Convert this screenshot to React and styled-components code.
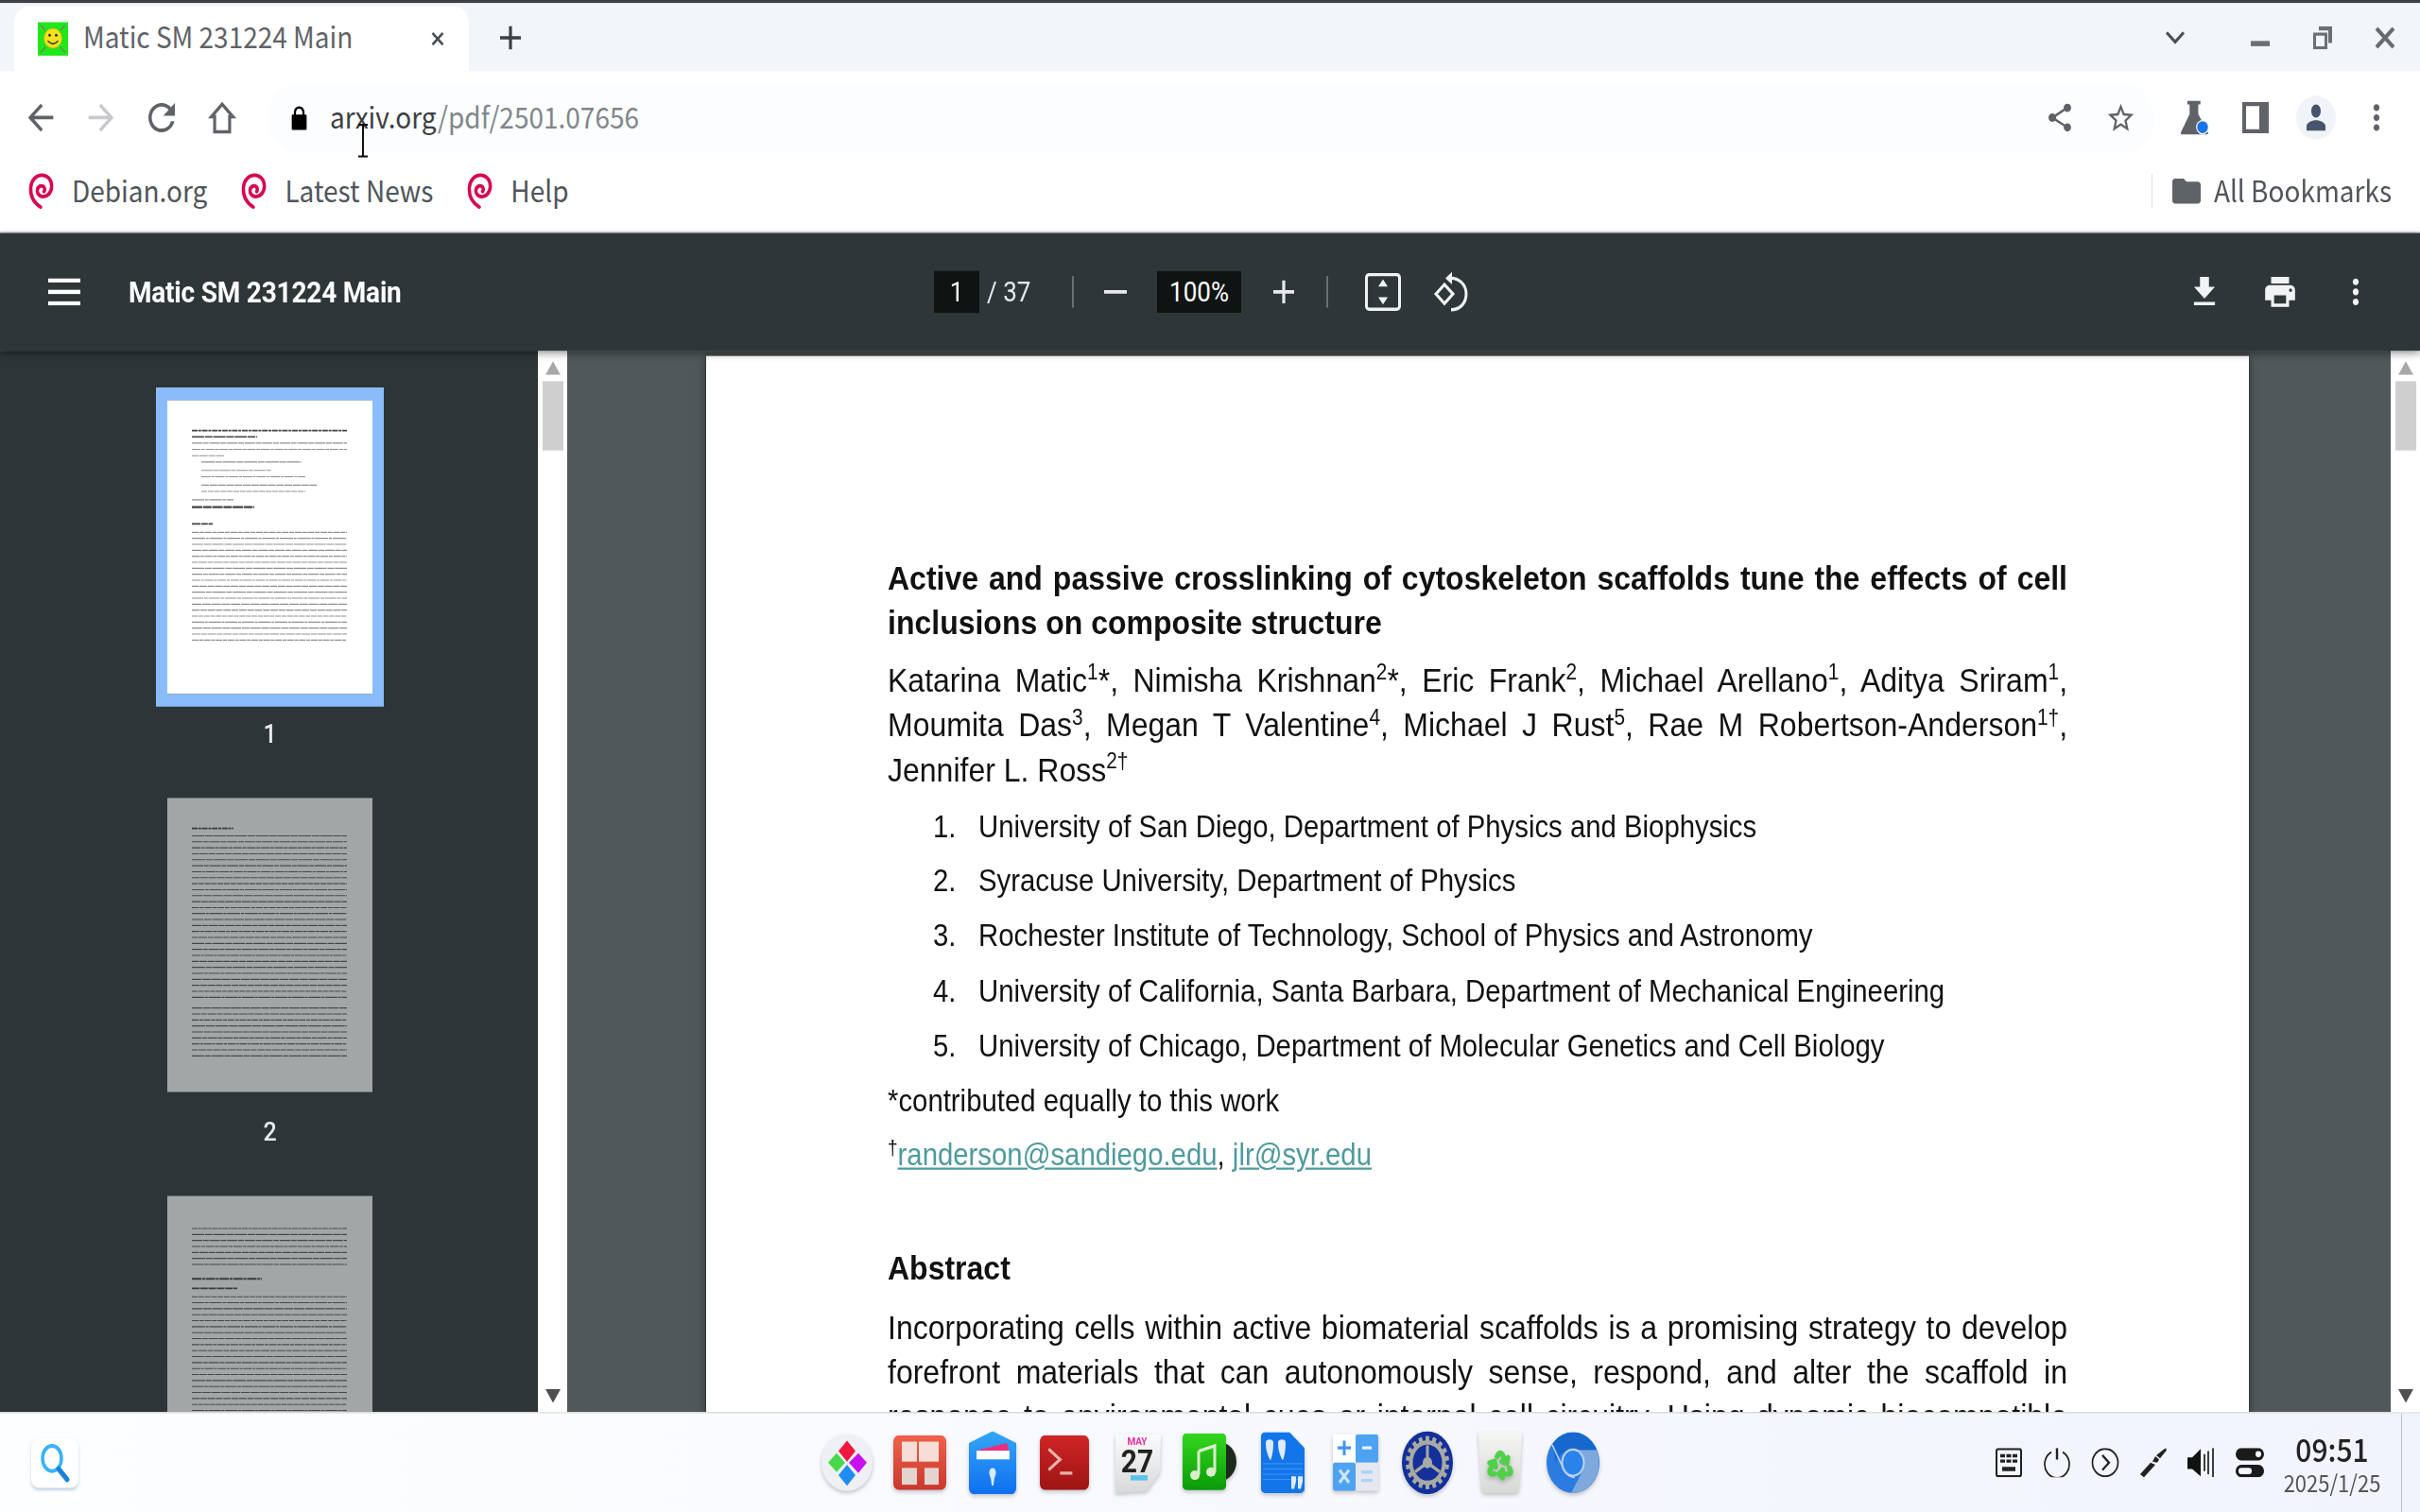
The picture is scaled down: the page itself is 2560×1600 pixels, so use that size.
import React from 'react';
import styled, { createGlobalStyle } from 'styled-components';
import { Recycle } from 'lucide-react';

const GlobalStyle = createGlobalStyle`
   html, body {
      margin: 0;
      padding: 0;
      background: #fff;
   }
`;

const UI_FONT = '"Noto Sans CJK SC", "Noto Sans", sans-serif';

const Frame = styled.div`
   width: 2560px;
   height: 1600px;
   overflow: hidden;
`;

// the capture is a 2560x1440 desktop stretched to 1600 high, so the whole
// screen is laid out at 1440 and stretched the same way
const Screen = styled.div`
   width: 2560px;
   height: 1440px;
   display: flex;
   flex-direction: column;
   overflow: hidden;
   transform: scaleY(1.1111);
   transform-origin: 0 0;
   font-family: ${UI_FONT};
`;

const TopEdge = styled.div`
   height: 3px;
   flex: none;
   background: #3b4043;
`;

const TabStrip = styled.div`
   height: 65px;
   flex: none;
   display: flex;
   align-items: center;
   background: #f2f6fa;
   padding-left: 15px;
`;

const Tab = styled.div`
   width: 481px;
   height: 62px;
   margin-top: 3px;
   display: flex;
   align-items: center;
   padding-left: 25px;
   box-sizing: border-box;
   background: #fff;
   border-radius: 16px 16px 0 0;
`;

const TabTitle = styled.span`
   margin-left: 16px;
   margin-bottom: 7px;
   width: 368px;
   font-size: 28px;
   color: #5f6368;
   white-space: nowrap;
`;

const Slot = styled.div`
   width: ${props => props.$width || 64}px;
   flex: none;
   display: flex;
   align-items: center;
   justify-content: center;
   color: ${props => props.$color || '#5f6368'};
   margin-left: ${props => props.$left || 0}px;
   margin-right: ${props => props.$right || 0}px;
`;

const WindowControls = styled.div`
   margin-left: auto;
   padding-right: 4px;
   display: flex;
   align-items: center;
`;

const Toolbar = styled.div`
   height: 72px;
   flex: none;
   padding-top: 8px;
   padding-left: 11px;
   padding-right: 14px;
   display: flex;
   align-items: center;
   background: #fff;
`;

const Omnibox = styled.div`
   position: relative;
   flex: 1;
   height: 67px;
   margin-left: 16px;
   margin-right: 11px;
   padding: 0 4px 0 20px;
   display: flex;
   align-items: center;
   background: #fbfdfe;
   border-radius: 34px;
`;

const Url = styled.span`
   margin-left: 19px;
   margin-bottom: 4px;
   font-size: 28px;
   color: #80868b;
`;

const UrlHost = styled.span`
   color: #3c4043;
`;

const TextCursor = styled.svg`
   position: absolute;
   left: 95px;
   top: 39px;
`;

const OmniActions = styled.div`
   margin-left: auto;
   display: flex;
   align-items: center;
`;

const Avatar = styled.div`
   width: 42px;
   height: 42px;
   border-radius: 50%;
   background: #f0f4f9;
   display: flex;
   align-items: center;
   justify-content: center;
`;

const BookmarkBar = styled.div`
   height: 74px;
   flex: none;
   padding: 0 30px 5px 29px;
   display: flex;
   align-items: center;
   gap: 35px;
   background: #fff;
   border-bottom: 1px solid #a9acae;
   box-sizing: border-box;
`;

const Bookmark = styled.div`
   display: flex;
   align-items: center;
   gap: 19px;
   font-size: 28px;
   color: #50555a;
`;

const BookmarkLabel = styled.span`
   margin-bottom: 2px;
`;

const AllBookmarks = styled(Bookmark)`
   margin-left: auto;
   height: 32px;
   padding-left: 18px;
   border-left: 1px solid #dadce0;
   gap: 11px;
`;

const PdfToolbar = styled.div`
   height: 112px;
   flex: none;
   position: relative;
   z-index: 2;
   display: flex;
   align-items: center;
   background: #2e3638;
   color: #fff;
   box-shadow: 0 3px 8px rgba(0, 0, 0, 0.45);
   font-family: Roboto, sans-serif;
`;

const PdfLeft = styled.div`
   width: 988px;
   flex: none;
   padding-left: 51px;
   box-sizing: border-box;
   display: flex;
   align-items: center;
   gap: 51px;
`;

const PdfTitle = styled.span`
   font-size: 28px;
   font-weight: 700;
   white-space: nowrap;
   letter-spacing: -0.2px;
`;

const DarkField = styled.div`
   width: ${props => props.$width}px;
   height: 40px;
   flex: none;
   background: #0f1412;
   display: flex;
   align-items: center;
   justify-content: center;
   font-size: 26px;
`;

const PageTotal = styled.div`
   width: 98px;
   flex: none;
   box-sizing: border-box;
   padding-left: 8px;
   font-size: 26px;
   color: #e8eaed;
`;

const Separator = styled.div`
   width: 2px;
   height: 30px;
   flex: none;
   background: #697072;
`;

const PdfRight = styled.div`
   margin-left: auto;
   padding-right: 28px;
   display: flex;
   align-items: center;
`;

const Workspace = styled.div`
   flex: 1;
   min-height: 0;
   display: flex;
   overflow: hidden;
`;

const Sidebar = styled.div`
   width: 569px;
   flex: none;
   padding: 47px 0 0 2px;
   box-sizing: border-box;
   display: flex;
   flex-direction: column;
   align-items: center;
   background: #2d3537;
   overflow: hidden;
`;

const Thumb = styled.div`
   flex: none;
   display: flex;
   flex-direction: column;
   align-items: center;
   margin-bottom: 47px;
`;

const ThumbPage = styled.div`
   width: 217px;
   height: 280px;
   flex: none;
   background: #fff;
   opacity: ${props => (props.$selected ? 1 : 0.56)};
   outline: ${props => (props.$selected ? '12px solid #8bbcfa' : 'none')};
`;

const ThumbSvg = styled.svg`
   display: block;
   filter: blur(0.4px);
`;

const ThumbLabel = styled.div`
   height: 28px;
   margin-top: 24px;
   line-height: 28px;
   font-family: Roboto, sans-serif;
   font-size: 25px;
   font-weight: 500;
   color: #e8eaed;
`;

const ScrollTrack = styled.div`
   width: ${props => props.$width}px;
   flex: none;
   display: flex;
   flex-direction: column;
   align-items: center;
   padding: 10px 0 9px;
   box-sizing: border-box;
   background: #fff;
`;

const ScrollThumb = styled.div`
   width: 22px;
   height: 66px;
   margin-top: 6px;
   flex: none;
   background: #cfcfcf;
`;

const ScrollArrowDown = styled.svg`
   margin-top: auto;
`;

const Viewer = styled.div`
   flex: 1;
   min-width: 0;
   padding: 5px 0 0 147px;
   background: #505859;
   overflow: hidden;
`;

const Page = styled.div`
   width: 1632px;
   min-height: 1300px;
   box-sizing: border-box;
   padding: 191px 192px 0;
   background: #fff;
   box-shadow: 0 0 8px rgba(0, 0, 0, 0.5);
   font-family: 'Liberation Sans', Arial, sans-serif;
   font-size: 32px;
   line-height: 42.4px;
   color: #111;
`;

const PaperLine = styled.div`
   text-align: ${props => (props.$last ? 'left' : 'justify')};
   text-align-last: ${props => (props.$last ? 'left' : 'justify')};
   white-space: nowrap;
   font-size: ${props => props.$size || 32}px;
   font-weight: ${props => (props.$bold ? 700 : 400)};
   margin-top: ${props => props.$top || 0}px;
`;

const Sup = styled.sup`
   display: inline-block;
   font-size: 0.65em;
   line-height: 0;
   vertical-align: super;
`;

const Affiliations = styled.ol`
   margin: 12px 0 0;
   padding: 0;
   list-style: none;
   font-size: 29.33px;
`;

const Affiliation = styled.li`
   display: flex;
   height: 42.4px;
   margin-bottom: 9.8px;
   white-space: nowrap;
`;

const AffNumber = styled.span`
   width: 96px;
   flex: none;
   padding-left: 48px;
   box-sizing: border-box;
`;

const MailLink = styled.span`
   color: #4f9a9c;
   text-decoration: underline;
`;

const Taskbar = styled.div`
   height: 95px;
   flex: none;
   position: relative;
   z-index: 3;
   display: grid;
   grid-template-columns: 1fr auto 1fr;
   align-items: center;
   background: linear-gradient(90deg, #fcfeff 0%, #f7f9fe 50%, #f1f4fd 100%);
   border-top: 1px solid #d9d9d9;
   box-sizing: border-box;
`;

const SearchTile = styled.div`
   width: 50px;
   height: 47px;
   margin-left: 33px;
   display: flex;
   align-items: center;
   justify-content: center;
   background: #fff;
   border-radius: 8px;
   box-shadow: 0 2px 3px rgba(90, 130, 180, 0.35);
`;

const Dock = styled.div`
   display: flex;
   align-items: center;
`;

const DockItem = styled.div`
   position: relative;
   width: 76.8px;
   display: flex;
   justify-content: center;

   svg {
      filter: blur(0.5px) drop-shadow(0 2px 2px rgba(0, 0, 0, 0.22));
   }
`;

const RunDot = styled.div`
   position: absolute;
   left: 28.4px;
   bottom: -36px;
   width: 20px;
   height: 4px;
   background: ${props => props.$color};
`;

const Tray = styled.div`
   height: 100%;
   display: flex;
   align-items: center;
   justify-content: flex-end;
   position: relative;
`;

const TrayIcon = styled.div`
   width: 51px;
   display: flex;
   justify-content: center;
`;

const Clock = styled.div`
   width: 120px;
   margin-left: 2px;
   margin-right: 13px;
   display: flex;
   flex-direction: column;
   align-items: center;
`;

const ClockTime = styled.div`
   font-size: 30px;
   font-weight: 500;
   line-height: 36px;
   color: #222;
`;

const ClockDate = styled.div`
   font-size: 22px;
   line-height: 28px;
   color: #555;
`;

const TrayEdge = styled.div`
   width: 1px;
   height: 100%;
   margin-right: 19px;
   background: #b9bcc2;
`;

const Glyph = ({ d, size = 36, fill = 'currentColor' }) => (
   <svg width={size} height={size} viewBox="0 0 24 24" fill={fill}>
      <path d={d} />
   </svg>
);

const Favicon = () => (
   <svg width="32" height="32" viewBox="0 0 32 32">
      <rect width="32" height="32" fill="#1fe81a" />
      <circle cx="16" cy="15.5" r="9.5" fill="#f4e01c" stroke="#c9b210" strokeWidth="0.6" />
      <circle cx="12.5" cy="12.5" r="1.4" fill="#333" />
      <circle cx="19.5" cy="12.5" r="1.4" fill="#333" />
      <path d="M10.5 18q5.5 5.5 11 0" fill="none" stroke="#333" strokeWidth="1.3" />
      <path d="M3 3l5 5M29 3l-5 5M3 29l5-5M29 29l-5-5" stroke="#6b8f50" strokeWidth="1.6" />
   </svg>
);

const DebianSwirl = () => (
   <svg width="28" height="36" viewBox="0 0 24 30" fill="none">
      <path
         d="M12 28C5 24 2.5 18 3 12 3.6 6 8 2 13 2c5.5 0 9 4 9 9 0 5.5-4.5 9-8.5 8.500-3-.4-5-3-4.500-5.500.5-2.500 3-4 5-3 1.800.9 2.200 3 1 4.300"
         stroke="#d70751"
         strokeWidth="3"
         strokeLinecap="round"
      />
   </svg>
);

const PATHS = {
   back: 'M20 11H7.830l5.590-5.590L12 4l-8 8 8 8 1.410-1.410L7.830 13H20v-2z',
   forward: 'M4 11h12.170l-5.590-5.590L12 4l8 8-8 8-1.410-1.410L16.170 13H4v-2z',
   reload: 'M17.650 6.350A7.958 7.958 0 0 0 12 4c-4.420 0-7.990 3.580-7.990 8s3.570 8 7.990 8c3.730 0 6.840-2.550 7.730-6h-2.080A5.990 5.990 0 0 1 12 18c-3.310 0-6-2.690-6-6s2.690-6 6-6c1.660 0 3.140.690 4.220 1.780L13 11h7V4l-2.350 2.350z',
   home: 'M12 2.500 2.500 12.500H6V21.500h12V12.500h3.500L12 2.500zM8 19.500v-9H7.200L12 5.400l4.800 5.100H16v9H8z',
   lock: 'M18 9h-1V7c0-2.760-2.240-5-5-5S7 4.240 7 7v2H6c-.6 0-1 .4-1 1v11c0 .6.4 1 1 1h12c.6 0 1-.4 1-1V10c0-.6-.4-1-1-1zM9 7c0-1.660 1.340-3 3-3s3 1.340 3 3v2H9V7z',
   share: 'M18 16.080c-.76 0-1.440.3-1.960.77L8.910 12.700c.05-.23.090-.46.090-.7s-.04-.47-.09-.7l7.050-4.110c.54.5 1.250.81 2.040.81 1.660 0 3-1.340 3-3s-1.340-3-3-3-3 1.340-3 3c0 .24.04.47.09.7L8.040 9.810C7.500 9.310 6.790 9 6 9c-1.660 0-3 1.340-3 3s1.340 3 3 3c.79 0 1.500-.31 2.040-.81l7.120 4.160c-.05.21-.08.43-.08.65 0 1.610 1.310 2.920 2.920 2.920s2.920-1.310 2.920-2.920-1.310-2.920-2.920-2.920z',
   star: 'M22 9.240l-7.190-.62L12 2 9.190 8.630 2 9.240l5.460 4.730L5.820 21 12 17.270 18.180 21l-1.630-7.030L22 9.240zM12 15.400l-3.760 2.270 1-4.280-3.320-2.880 4.380-.38L12 6.100l1.710 4.040 4.380.38-3.320 2.880 1 4.280L12 15.400z',
   person: 'M12 12c2.210 0 4-2.240 4-5s-1.790-5-4-5-4 2.240-4 5 1.790 5 4 5zm0 2c-3.670 0-8 1.840-8 4.500V22h16v-3.500c0-2.660-4.330-4.500-8-4.500z',
   dots: 'M12 8c1.100 0 2-.9 2-2s-.9-2-2-2-2 .9-2 2 .9 2 2 2zm0 2c-1.100 0-2 .9-2 2s.9 2 2 2 2-.9 2-2-.9-2-2-2zm0 6c-1.100 0-2 .9-2 2s.9 2 2 2 2-.9 2-2-.9-2-2-2z',
   folder: 'M10 4H4c-1.100 0-2 .9-2 2v12c0 1.100.9 2 2 2h16c1.100 0 2-.9 2-2V8c0-1.100-.9-2-2-2h-8l-2-2z',
   download: 'M19 9h-4V3H9v6H5l7 7 7-7zM5 18v2h14v-2H5z',
   print: 'M19 8H5c-1.660 0-3 1.340-3 3v6h4v4h12v-4h4v-6c0-1.660-1.340-3-3-3zm-3 11H8v-5h8v5zm3-7c-.55 0-1-.45-1-1s.45-1 1-1 1 .45 1 1-.45 1-1 1zm-1-9H6v4h12V3z',
};

const FlaskIcon = () => (
   <svg width="32" height="36" viewBox="0 0 28 30">
      <path d="M7 1h12v3h-2v8l9 15c.6 1.200 0 2-1.200 2H2.200C1 29 .4 28.200 1 27l8-15V4H7V1z" fill="#5f6368" />
      <circle cx="21" cy="23" r="6" fill="#fff" />
      <circle cx="21" cy="23" r="5" fill="#1a73e8" />
   </svg>
);

const SidePanelIcon = () => (
   <svg width="28" height="30" viewBox="0 0 28 30">
      <path d="M0 0h28v30H0V0zm4 4v22h14V4H4z" fill="#5f6368" fillRule="evenodd" />
   </svg>
);

const ChevronIcon = () => (
   <svg width="22" height="14" viewBox="0 0 22 14" fill="none" stroke="#4b5054" strokeWidth="3">
      <path d="M2 2l9 9 9-9" />
   </svg>
);

const MinimizeIcon = () => (
   <svg width="20" height="20" viewBox="0 0 20 20">
      <rect y="13" width="20" height="5" fill="#6a7074" />
   </svg>
);

const RestoreIcon = () => (
   <svg width="20" height="22" viewBox="0 0 20 22" fill="#6a7074">
      <path d="M6 0h14v16h-4V4H6V0z" />
      <path d="M0 6h15v16H0V6zm3 3v10h9V9H3z" fillRule="evenodd" />
   </svg>
);

const CloseIcon = () => (
   <svg width="22" height="22" viewBox="0 0 22 22" stroke="#666c70" strokeWidth="4" fill="none">
      <path d="M2 2l18 18M20 2L2 20" />
   </svg>
);

const TabCloseIcon = () => (
   <svg width="14" height="14" viewBox="0 0 14 14" stroke="#4a4f53" strokeWidth="2.4" fill="none">
      <path d="M1.500 1.500l11 11M12.500 1.500l-11 11" />
   </svg>
);

const PlusIcon = ({ color = '#3c4043', size = 24, weight = 3.2 }) => (
   <svg width={size} height={size} viewBox="0 0 24 24" stroke={color} strokeWidth={weight} fill="none">
      <path d="M12 1v22M1 12h22" />
   </svg>
);

const MinusIcon = () => (
   <svg width="24" height="24" viewBox="0 0 24 24" stroke="#e8eaed" strokeWidth="3.2">
      <path d="M0 12h24" />
   </svg>
);

const HamburgerIcon = () => (
   <svg width="34" height="26" viewBox="0 0 34 26" fill="#fff">
      <rect y="0" width="34" height="4" />
      <rect y="11" width="34" height="4" />
      <rect y="22" width="34" height="4" />
   </svg>
);

const FitIcon = () => (
   <svg width="38" height="36" viewBox="0 0 38 36" fill="none" stroke="#f0f1f2" strokeWidth="3">
      <rect x="1.500" y="1.500" width="35" height="33" rx="3" />
      <path d="M19 6l5 7H14z M19 30l5-7H14z" fill="#f0f1f2" stroke="none" />
   </svg>
);

const RotateIcon = () => (
   <svg width="38" height="40" viewBox="0 0 38 40" fill="none" stroke="#f0f1f2" strokeWidth="3">
      <path d="M3 22l9-9 9 9-9 9z" />
      <path d="M17 7c9-1 18 5 18 15s-8 15-16 15" />
      <path d="M20 1l-7 6 7 6z" fill="#f0f1f2" stroke="none" />
   </svg>
);

const ArrowUp = ({ color = '#a8a8a8' }) => (
   <svg width="16" height="13" viewBox="0 0 16 13">
      <path d="M8 0l8 13H0z" fill={color} />
   </svg>
);

const SearchIcon = () => (
   <svg width="34" height="40" viewBox="0 0 34 40" fill="none">
      <ellipse cx="14" cy="16" rx="10" ry="12" stroke="#38b3fb" strokeWidth="3.600" />
      <path d="M21 26l9 10" stroke="#1a83d9" strokeWidth="5" strokeLinecap="round" />
   </svg>
);

const LauncherDock = () => (
   <svg width="56" height="56" viewBox="0 0 56 56">
      <circle cx="28" cy="28" r="27" fill="#eef0f4" />
      <path d="M28 7l9 10-9 10-9-10z" fill="#f0173c" />
      <path d="M8 28l9-9 9 9-9 9z" fill="#46d94a" />
      <path d="M30 28l10-9 9 9-9 10z" fill="#c711f0" />
      <path d="M28 30l9 10-9 10-9-10z" fill="#1e8cf0" />
   </svg>
);

const GridDock = () => (
   <svg width="56" height="52" viewBox="0 0 56 52">
      <defs>
         <linearGradient id="gridRed" x1="0" y1="0" x2="0" y2="1">
            <stop offset="0" stopColor="#f0614c" />
            <stop offset="1" stopColor="#c8382c" />
         </linearGradient>
      </defs>
      <rect width="56" height="52" rx="6" fill="url(#gridRed)" />
      <rect x="9" y="6" width="16" height="19" fill="#f6ded6" />
      <rect x="27" y="6" width="21" height="19" fill="#f6ded6" />
      <rect x="9" y="31" width="16" height="16" fill="#e4d4cf" />
      <rect x="33" y="31" width="15" height="16" fill="#e4d4cf" />
   </svg>
);

const FilesDock = () => (
   <svg width="50" height="60" viewBox="0 0 56 58" preserveAspectRatio="none">
      <defs>
         <linearGradient id="filesBlue" x1="0" y1="0" x2="0" y2="1">
            <stop offset="0" stopColor="#35a6f5" />
            <stop offset="1" stopColor="#0f6ff0" />
         </linearGradient>
      </defs>
      <path d="M28 0l8 3 20 8v41c0 3-2 6-6 6H6c-4 0-6-3-6-6V11L20 3z" fill="url(#filesBlue)" />
      <path d="M9 18l36-7 2 7z" fill="#ee2c7c" />
      <rect x="9" y="18" width="39" height="8" fill="#fff" />
      <path d="M28 34c-3 0-4 2-4 5l2 5 1 6h2l1-6 2-5c0-3-1-5-4-5z" fill="#d8eaff" />
   </svg>
);

const TerminalDock = () => (
   <svg width="52" height="52" viewBox="0 0 56 52" preserveAspectRatio="none">
      <defs>
         <linearGradient id="termRed" x1="0" y1="0" x2="0" y2="1">
            <stop offset="0" stopColor="#cf2525" />
            <stop offset="1" stopColor="#9e1414" />
         </linearGradient>
      </defs>
      <rect width="56" height="52" rx="6" fill="url(#termRed)" />
      <path d="M10 13l13 10-13 10" fill="none" stroke="#e9b3ac" strokeWidth="3" />
      <path d="M23 36h14" stroke="#e9b3ac" strokeWidth="3" />
   </svg>
);

const CalendarDock = () => (
   <svg width="54" height="58" viewBox="0 0 54 58">
      <defs>
         <linearGradient id="sheetGray" x1="0" y1="0" x2="0" y2="1">
            <stop offset="0" stopColor="#fbfbfb" />
            <stop offset="1" stopColor="#d9d9d9" />
         </linearGradient>
      </defs>
      <path d="M4 2h48l-1 36-14 18-33 2z" fill="url(#sheetGray)" />
      <text x="27" y="12" fontSize="10" fontWeight="700" fill="#ee2aa0" textAnchor="middle" fontFamily="Roboto, sans-serif">MAY</text>
      <text x="27" y="38" fontSize="30" fontWeight="700" fill="#222" textAnchor="middle" fontFamily="Roboto, sans-serif">27</text>
      <rect x="20" y="41" width="18" height="5" fill="#5cc3ec" />
   </svg>
);

const MusicDock = () => (
   <svg width="58" height="56" viewBox="0 0 58 56">
      <defs>
         <linearGradient id="musicGreen" x1="0" y1="0" x2="0" y2="1">
            <stop offset="0" stopColor="#34d71e" />
            <stop offset="1" stopColor="#0a9a0a" />
         </linearGradient>
      </defs>
      <circle cx="38" cy="27" r="19" fill="#1b2a1d" />
      <rect width="46" height="54" rx="4" fill="url(#musicGreen)" />
      <path d="M17 17l17-5v25" fill="none" stroke="#d8efc9" strokeWidth="3" />
      <path d="M17 17v22" stroke="#d8efc9" strokeWidth="3" />
      <ellipse cx="13" cy="40" rx="5" ry="4.500" fill="#d8efc9" />
      <ellipse cx="30" cy="37" rx="5" ry="4.500" fill="#d8efc9" />
   </svg>
);

const QuotesDock = () => (
   <svg width="46" height="58" viewBox="0 0 46 58">
      <path d="M4 0h26l16 15v39c0 2-2 4-4 4H4c-2 0-4-2-4-4V4c0-2 2-4 4-4z" fill="#1275ea" />
      <path d="M2 30h42M2 35h42M2 40h42M2 45h42" stroke="#3f92f0" strokeWidth="1" />
      <path d="M5 10c0-4 8-4 8 0 0 7-1 12-3 17-3-5-5-10-5-17zM18 10c0-4 8-4 8 0 0 7-1 12-3 17-3-5-5-10-5-17z" fill="#dfeafa" />
      <path d="M32 42h5v5l-2 7h-3zM39 42h5v5l-2 7h-3z" fill="#dfeafa" />
   </svg>
);

const CalcDock = () => (
   <svg width="48" height="54" viewBox="0 0 48 54">
      <rect width="24" height="27" fill="#fff" />
      <rect x="24" width="24" height="27" rx="3" fill="#4da2f2" />
      <rect y="27" width="24" height="27" rx="3" fill="#4da2f2" />
      <rect x="24" y="27" width="24" height="27" rx="3" fill="#e4e8f0" />
      <path d="M12 6v14M5 13h14" stroke="#3f97ef" strokeWidth="3" />
      <path d="M30 36h12M30 44h12" stroke="#b0d2f6" strokeWidth="3" />
      <path d="M31 13h10" stroke="#e6f1fd" strokeWidth="3" />
      <path d="M7 34l10 12M17 34L7 46" stroke="#cfe5fb" strokeWidth="3" />
   </svg>
);

const GearDock = () => {
   const teeth = Array.from({ length: 18 }, (_, i) => i * 20);
   return (
      <svg width="54" height="60" viewBox="0 0 54 60">
         <ellipse cx="27" cy="30" rx="27" ry="30" fill="#13309a" />
         <g transform="translate(27 30) scale(1 1.100)">
            {teeth.map(a => (
               <rect key={a} x="-2" y="-23" width="4" height="6" fill="#a9a9a4" transform={`rotate(${a})`} />
            ))}
            <circle r="17.500" fill="none" stroke="#a9a9a4" strokeWidth="4" />
            <circle r="5" fill="#a9a9a4" />
            <path d="M0 0V-15M0 0L13 8M0 0L-13 8" stroke="#a9a9a4" strokeWidth="3" />
         </g>
      </svg>
   );
};

const TrashDock = () => (
   <svg width="46" height="58" viewBox="0 0 46 58">
      <defs>
         <linearGradient id="canGray" x1="0" y1="0" x2="0" y2="1">
            <stop offset="0" stopColor="#f6f6f4" />
            <stop offset="1" stopColor="#d7d9d6" />
         </linearGradient>
      </defs>
      <path d="M0 0h46l-3 54c0 2-2 4-4 4H7c-2 0-4-2-4-4z" fill="url(#canGray)" />
      <Recycle x="8" y="16" size="30" stroke="#4fd14a" strokeWidth="4" />
   </svg>
);

const ChromiumDock = () => (
   <svg width="56" height="58" viewBox="0 0 56 58">
      <ellipse cx="28" cy="29" rx="28" ry="29" fill="#2c7be0" />
      <path d="M6 12C12 4 20 0 28 0c10 0 20 6 25 17H29C20 16 13 20 10 29z" fill="#1668cf" />
      <path d="M53 17c4 10 3 21-3 29-6 8-14 12-24 12l12-21c3-6 2-14-5-20z" fill="#7fa9de" />
      <ellipse cx="28" cy="29" rx="12.500" ry="13.500" fill="#bcd3f0" />
      <ellipse cx="28" cy="29" rx="10.500" ry="11.500" fill="#2b83ea" />
      <path d="M6 12l12 23c2 4 6 8 12 8" fill="none" stroke="#bcd3f0" strokeWidth="1.500" />
   </svg>
);

const KeyboardTray = () => (
   <svg width="28" height="28" viewBox="0 0 28 28" fill="#222">
      <path d="M3 0h22a3 3 0 0 1 3 3v22a3 3 0 0 1-3 3H3a3 3 0 0 1-3-3V3a3 3 0 0 1 3-3zm0 2a1 1 0 0 0-1 1v22a1 1 0 0 0 1 1h22a1 1 0 0 0 1-1V3a1 1 0 0 0-1-1H3z" fillRule="evenodd" />
      <path d="M5 6h5v3H5zM11.500 6h5v3h-5zM18 6h5v3h-5zM5 11h5v3H5zM11.500 11h5v3h-5zM18 11h5v3h-5zM7 18h14v4H7z" />
   </svg>
);

const PowerTray = () => (
   <svg width="30" height="28" viewBox="0 0 30 28" fill="none" stroke="#222" strokeWidth="1.700">
      <path d="M9 4a13 13 0 1 0 12 0" />
      <path d="M15 0v11" strokeWidth="2.400" />
   </svg>
);

const ArrowCircleTray = () => (
   <svg width="30" height="28" viewBox="0 0 30 28" fill="none" stroke="#222" strokeWidth="1.700">
      <ellipse cx="15" cy="14" rx="13.500" ry="13" />
      <path d="M12 7l7 7-7 7" strokeWidth="2.200" />
   </svg>
);

const PenTray = () => (
   <svg width="28" height="28" viewBox="0 0 28 28" fill="#222">
      <path d="M27 0l1 2-7 8-4-3zM16 8l4 3-2 3-5-1zM11 14l5 2L4 28l-3-2-1-1z" />
   </svg>
);

const SpeakerTray = () => (
   <svg width="30" height="28" viewBox="0 0 30 28" fill="#111">
      <path d="M0 9h5L14 1v26L5 20H0z" />
      <path d="M18 6v16M22 3v22M27 0v28" stroke="#111" strokeWidth="1.600" fill="none" />
   </svg>
);

const TogglesTray = () => (
   <svg width="30" height="28" viewBox="0 0 30 28" fill="#1a1a1a">
      <path d="M6 0h18a6 6 0 0 1 0 12H6A6 6 0 0 1 6 0zm18 3a3 3 0 1 0 0 6 3 3 0 0 0 0-6z" fillRule="evenodd" />
      <path d="M6 16h18a6 6 0 0 1 0 12H6a6 6 0 0 1 0-12zm0 3a3 3 0 0 0 0 6h8a3 3 0 0 0 0-6H6z" fillRule="evenodd" />
   </svg>
);

// rows of a scaled page, drawn as broken strokes: [y, x1, x2, weight]
const row = (y, x1 = 26, x2 = 190, weight = 1) => [y, x1, x2, weight];

const range = (from, to, step) => {
   const out = [];
   for (let y = from; y <= to; y += step) out.push(row(y));
   return out;
};

const THUMB_ONE = [
   row(29, 26, 190, 1.500), row(35, 26, 95, 1.500), row(41), row(47), row(53, 26, 60),
   row(59, 36, 142), row(67, 36, 110), row(73, 36, 146), row(81, 36, 158), row(87, 36, 146),
   row(95, 26, 70), row(102, 26, 92, 2), row(118, 26, 48, 1.500),
   ...range(126, 234, 5.700),
];

const THUMB_TWO = [
   row(29, 26, 70, 1.500),
   ...range(36, 105, 5.700),
   ...range(110, 195, 5.700),
   ...range(200, 246, 5.700),
];

const THUMB_THREE = [
   ...range(31, 70, 5.700),
   row(79, 26, 100, 1.800),
   row(88, 26, 74, 1.500),
   ...range(96, 232, 5.700),
];

const ThumbDrawing = ({ rows, strength = 0.5 }) => (
   <ThumbSvg width="217" height="280" viewBox="0 0 217 280">
      {rows.map(([y, x1, x2, weight], i) => (
         <line
            key={i}
            x1={x1}
            x2={x2}
            y1={y}
            y2={y}
            stroke="#222"
            strokeWidth={weight}
            strokeOpacity={weight > 1.300 ? 0.85 : strength}
            strokeDasharray={`${6 + (i * 7) % 9} 0.8 ${3 + (i * 5) % 7} 0.8`}
         />
      ))}
   </ThumbSvg>
);

const AFFILIATIONS = [
   'University of San Diego, Department of Physics and Biophysics',
   'Syracuse University, Department of Physics',
   'Rochester Institute of Technology, School of Physics and Astronomy',
   'University of California, Santa Barbara, Department of Mechanical Engineering',
   'University of Chicago, Department of Molecular Genetics and Cell Biology',
];

const DOCK = [
   { key: 'launcher', Icon: LauncherDock },
   { key: 'grid', Icon: GridDock },
   { key: 'files', Icon: FilesDock, dot: '#111' },
   { key: 'terminal', Icon: TerminalDock },
   { key: 'calendar', Icon: CalendarDock },
   { key: 'music', Icon: MusicDock },
   { key: 'quotes', Icon: QuotesDock },
   { key: 'calc', Icon: CalcDock },
   { key: 'gear', Icon: GearDock },
   { key: 'trash', Icon: TrashDock },
   { key: 'chromium', Icon: ChromiumDock, dot: '#2b83ea' },
];

const TRAY = [KeyboardTray, PowerTray, ArrowCircleTray, PenTray, SpeakerTray, TogglesTray];

const App = () => (
   <Frame>
      <GlobalStyle />
      <Screen>
         <TopEdge />
         <TabStrip>
            <Tab>
               <Favicon />
               <TabTitle>Matic SM 231224 Main</TabTitle>
               <TabCloseIcon />
            </Tab>
            <Slot $width={88}>
               <PlusIcon />
            </Slot>
            <WindowControls>
               <Slot $width={66} $right={24}>
                  <ChevronIcon />
               </Slot>
               <Slot $width={66}>
                  <MinimizeIcon />
               </Slot>
               <Slot $width={66}>
                  <RestoreIcon />
               </Slot>
               <Slot $width={66}>
                  <CloseIcon />
               </Slot>
            </WindowControls>
         </TabStrip>

         <Toolbar>
            <Slot>
               <Glyph d={PATHS.back} size={40} />
            </Slot>
            <Slot $color="#c7c9cc">
               <Glyph d={PATHS.forward} size={40} />
            </Slot>
            <Slot>
               <Glyph d={PATHS.reload} size={42} />
            </Slot>
            <Slot>
               <Glyph d={PATHS.home} size={38} />
            </Slot>
            <Omnibox>
               <Glyph d={PATHS.lock} size={27} />
               <Url>
                  <UrlHost>arxiv.org</UrlHost>/pdf/2501.07656
               </Url>
               <TextCursor width="12" height="32" viewBox="0 0 12 32" fill="none" stroke="#111" strokeWidth="2">
                  <path d="M1 1h10M6 1v30M1 31h10" />
               </TextCursor>
               <OmniActions>
                  <Slot>
                     <Glyph d={PATHS.share} size={32} />
                  </Slot>
                  <Slot>
                     <Glyph d={PATHS.star} size={33} />
                  </Slot>
               </OmniActions>
            </Omnibox>
            <Slot>
               <FlaskIcon />
            </Slot>
            <Slot>
               <SidePanelIcon />
            </Slot>
            <Slot>
               <Avatar>
                  <Glyph d={PATHS.person} size={30} fill="#46556c" />
               </Avatar>
            </Slot>
            <Slot>
               <Glyph d={PATHS.dots} size={38} />
            </Slot>
         </Toolbar>

         <BookmarkBar>
            <Bookmark>
               <DebianSwirl />
               <BookmarkLabel>Debian.org</BookmarkLabel>
            </Bookmark>
            <Bookmark>
               <DebianSwirl />
               <BookmarkLabel>Latest News</BookmarkLabel>
            </Bookmark>
            <Bookmark>
               <DebianSwirl />
               <BookmarkLabel>Help</BookmarkLabel>
            </Bookmark>
            <AllBookmarks>
               <Glyph d={PATHS.folder} size={36} fill="#5f6368" />
               <BookmarkLabel>All Bookmarks</BookmarkLabel>
            </AllBookmarks>
         </BookmarkBar>

         <PdfToolbar>
            <PdfLeft>
               <HamburgerIcon />
               <PdfTitle>Matic SM 231224 Main</PdfTitle>
            </PdfLeft>
            <DarkField $width={48}>1</DarkField>
            <PageTotal>/ 37</PageTotal>
            <Separator />
            <Slot $width={88}>
               <MinusIcon />
            </Slot>
            <DarkField $width={89}>100%</DarkField>
            <Slot $width={90}>
               <PlusIcon color="#e8eaed" />
            </Slot>
            <Separator />
            <Slot $width={72} $left={22}>
               <FitIcon />
            </Slot>
            <Slot $width={72}>
               <RotateIcon />
            </Slot>
            <PdfRight>
               <Slot $width={80} $color="#f1f3f4">
                  <Glyph d={PATHS.download} size={38} />
               </Slot>
               <Slot $width={80} $color="#f1f3f4">
                  <Glyph d={PATHS.print} size={38} />
               </Slot>
               <Slot $width={80} $color="#f1f3f4">
                  <Glyph d={PATHS.dots} size={38} />
               </Slot>
            </PdfRight>
         </PdfToolbar>

         <Workspace>
            <Sidebar>
               <Thumb>
                  <ThumbPage $selected>
                     <ThumbDrawing rows={THUMB_ONE} />
                  </ThumbPage>
                  <ThumbLabel>1</ThumbLabel>
               </Thumb>
               <Thumb>
                  <ThumbPage>
                     <ThumbDrawing rows={THUMB_TWO} strength={0.75} />
                  </ThumbPage>
                  <ThumbLabel>2</ThumbLabel>
               </Thumb>
               <Thumb>
                  <ThumbPage>
                     <ThumbDrawing rows={THUMB_THREE} strength={0.75} />
                  </ThumbPage>
               </Thumb>
            </Sidebar>
            <ScrollTrack $width={31}>
               <ArrowUp />
               <ScrollThumb />
               <ScrollArrowDown width="16" height="13" viewBox="0 0 16 13">
                  <path d="M0 0h16L8 13z" fill="#505050" />
               </ScrollArrowDown>
            </ScrollTrack>
            <Viewer>
               <Page>
                  <PaperLine $bold>Active and passive crosslinking of cytoskeleton scaffolds tune the effects of cell</PaperLine>
                  <PaperLine $bold $last>inclusions on composite structure</PaperLine>
                  <PaperLine $top={12}>
                     Katarina Matic<Sup>1</Sup>*, Nimisha Krishnan<Sup>2</Sup>*, Eric Frank<Sup>2</Sup>, Michael Arellano<Sup>1</Sup>, Aditya Sriram<Sup>1</Sup>,
                  </PaperLine>
                  <PaperLine>
                     Moumita Das<Sup>3</Sup>, Megan T Valentine<Sup>4</Sup>, Michael J Rust<Sup>5</Sup>, Rae M Robertson-Anderson<Sup>1†</Sup>,
                  </PaperLine>
                  <PaperLine $last>
                     Jennifer L. Ross<Sup>2†</Sup>
                  </PaperLine>
                  <Affiliations>
                     {AFFILIATIONS.map((name, index) => (
                        <Affiliation key={name}>
                           <AffNumber>{index + 1}.</AffNumber>
                           {name}
                        </Affiliation>
                     ))}
                  </Affiliations>
                  <PaperLine $last $size={29.33}>*contributed equally to this work</PaperLine>
                  <PaperLine $last $top={10} $size={29.33}>
                     <Sup>†</Sup>
                     <MailLink>randerson@sandiego.edu</MailLink>, <MailLink>jlr@syr.edu</MailLink>
                  </PaperLine>
                  <PaperLine $last $bold $top={65}>Abstract</PaperLine>
                  <PaperLine $top={14}>Incorporating cells within active biomaterial scaffolds is a promising strategy to develop</PaperLine>
                  <PaperLine>forefront materials that can autonomously sense, respond, and alter the scaffold in</PaperLine>
                  <PaperLine>response to environmental cues or internal cell circuitry. Using dynamic biocompatible</PaperLine>
               </Page>
            </Viewer>
            <ScrollTrack $width={31}>
               <ArrowUp />
               <ScrollThumb />
               <ScrollArrowDown width="16" height="13" viewBox="0 0 16 13">
                  <path d="M0 0h16L8 13z" fill="#505050" />
               </ScrollArrowDown>
            </ScrollTrack>
         </Workspace>

         <Taskbar>
            <SearchTile>
               <SearchIcon />
            </SearchTile>
            <Dock>
               {DOCK.map(({ key, Icon, dot }) => (
                  <DockItem key={key}>
                     <Icon />
                     {dot && <RunDot $color={dot} />}
                  </DockItem>
               ))}
            </Dock>
            <Tray>
               {TRAY.map((Icon, index) => (
                  <TrayIcon key={index}>
                     <Icon />
                  </TrayIcon>
               ))}
               <Clock>
                  <ClockTime>09:51</ClockTime>
                  <ClockDate>2025/1/25</ClockDate>
               </Clock>
               <TrayEdge />
            </Tray>
         </Taskbar>
      </Screen>
   </Frame>
);

export default App;
